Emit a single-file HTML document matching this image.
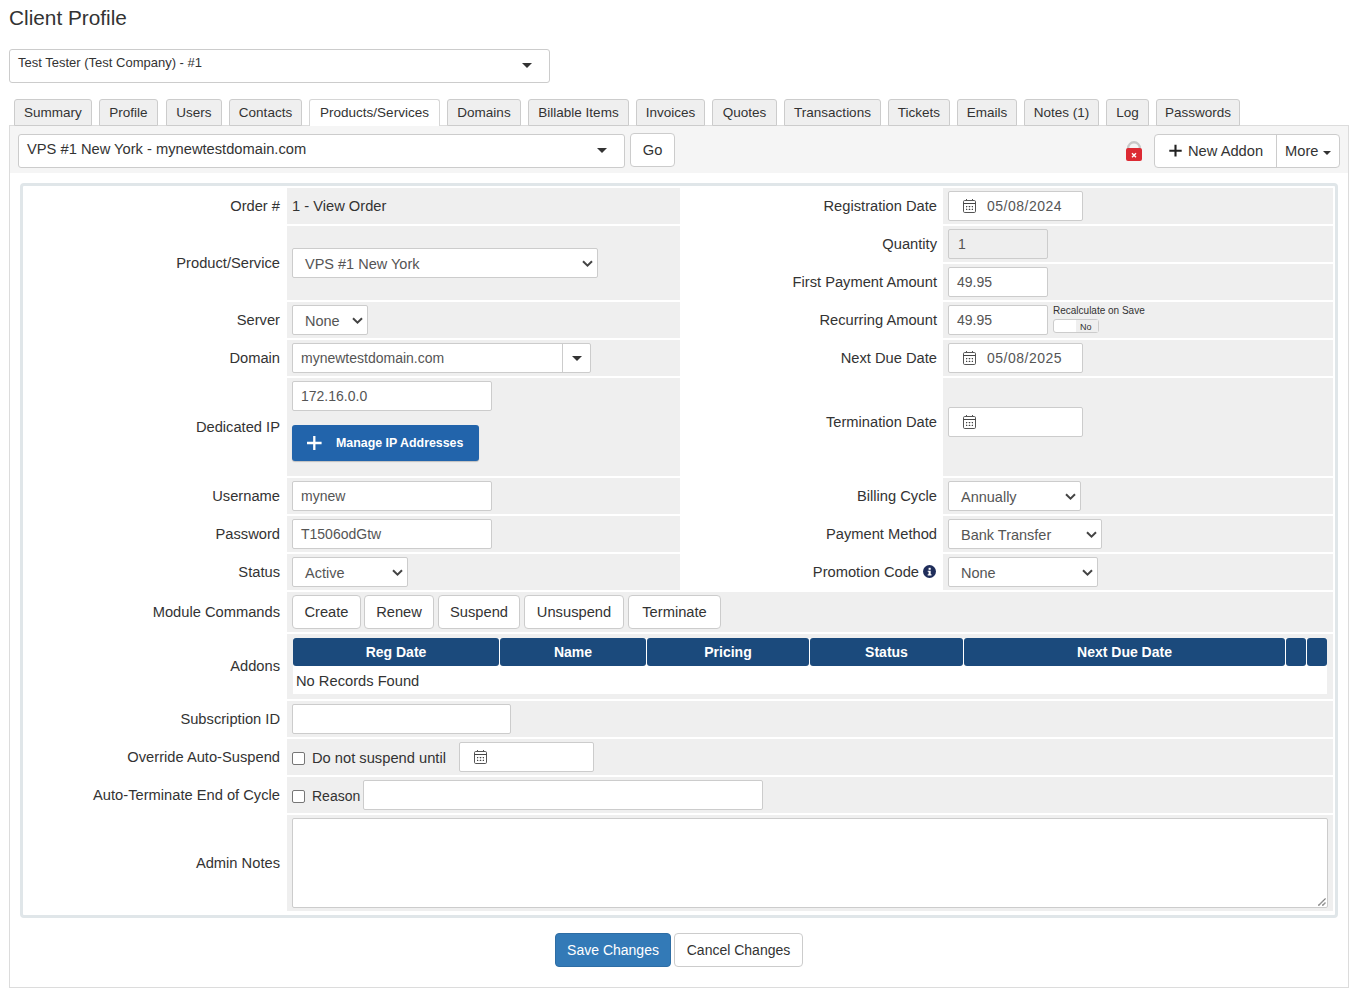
<!DOCTYPE html><html><head><meta charset="utf-8"><style>
html,body{margin:0;padding:0;background:#fff;}
body{width:1359px;height:997px;position:relative;overflow:hidden;font-family:"Liberation Sans",sans-serif;color:#333;}
.a{position:absolute;box-sizing:border-box;}
.t{font-size:14.7px;color:#333;white-space:nowrap;}
.it{font-size:14px;color:#555;white-space:nowrap;}
.inp{border:1px solid #ccc;border-radius:2px;}
.tab{background:#efefef;border:1px solid #ccc;border-radius:3px 3px 0 0;}
.fa{background:#efefef;}
.btn{background:#fff;border:1px solid #ccc;border-radius:4px;}
</style></head><body>
<div class="a t" style="left:9px;top:3px;height:30px;line-height:30px;font-size:20.8px;color:#333;">Client Profile</div>
<div class="a " style="left:9px;top:49px;width:541px;height:34px;background:#fff;border:1px solid #ccc;border-radius:3px;"></div>
<div class="a t" style="left:18px;top:53px;height:20px;line-height:20px;font-size:13px;color:#333;">Test Tester (Test Company) - #1</div>
<div class="a" style="left:522px;top:63px;width:10px;height:5px;line-height:0"><svg width="10" height="5" viewBox="0 0 10 5"><path d="M0 0 L10 0 L5 5 Z" fill="#333"/></svg></div>
<div class="a " style="left:9px;top:125px;width:1340px;height:863px;background:#fff;border:1px solid #dcdcdc;"></div>
<div class="a " style="left:10px;top:126px;width:1338px;height:47px;background:#f5f5f5;"></div>
<div class="a tab" style="left:14px;top:99px;width:78px;height:27px;"></div>
<div class="a t" style="left:14px;top:100px;width:78px;height:25px;line-height:25px;text-align:center;font-size:13.5px;">Summary</div>
<div class="a tab" style="left:99px;top:99px;width:59px;height:27px;"></div>
<div class="a t" style="left:99px;top:100px;width:59px;height:25px;line-height:25px;text-align:center;font-size:13.5px;">Profile</div>
<div class="a tab" style="left:166px;top:99px;width:56px;height:27px;"></div>
<div class="a t" style="left:166px;top:100px;width:56px;height:25px;line-height:25px;text-align:center;font-size:13.5px;">Users</div>
<div class="a tab" style="left:229px;top:99px;width:73px;height:27px;"></div>
<div class="a t" style="left:229px;top:100px;width:73px;height:25px;line-height:25px;text-align:center;font-size:13.5px;">Contacts</div>
<div class="a tab" style="left:309px;top:99px;width:131px;height:27px;background:#fff;border-bottom:none;border-color:#d6d6d6;"></div>
<div class="a t" style="left:309px;top:100px;width:131px;height:25px;line-height:25px;text-align:center;font-size:13.5px;">Products/Services</div>
<div class="a tab" style="left:447px;top:99px;width:74px;height:27px;"></div>
<div class="a t" style="left:447px;top:100px;width:74px;height:25px;line-height:25px;text-align:center;font-size:13.5px;">Domains</div>
<div class="a tab" style="left:528px;top:99px;width:101px;height:27px;"></div>
<div class="a t" style="left:528px;top:100px;width:101px;height:25px;line-height:25px;text-align:center;font-size:13.5px;">Billable Items</div>
<div class="a tab" style="left:636px;top:99px;width:69px;height:27px;"></div>
<div class="a t" style="left:636px;top:100px;width:69px;height:25px;line-height:25px;text-align:center;font-size:13.5px;">Invoices</div>
<div class="a tab" style="left:712px;top:99px;width:65px;height:27px;"></div>
<div class="a t" style="left:712px;top:100px;width:65px;height:25px;line-height:25px;text-align:center;font-size:13.5px;">Quotes</div>
<div class="a tab" style="left:784px;top:99px;width:97px;height:27px;"></div>
<div class="a t" style="left:784px;top:100px;width:97px;height:25px;line-height:25px;text-align:center;font-size:13.5px;">Transactions</div>
<div class="a tab" style="left:888px;top:99px;width:62px;height:27px;"></div>
<div class="a t" style="left:888px;top:100px;width:62px;height:25px;line-height:25px;text-align:center;font-size:13.5px;">Tickets</div>
<div class="a tab" style="left:957px;top:99px;width:60px;height:27px;"></div>
<div class="a t" style="left:957px;top:100px;width:60px;height:25px;line-height:25px;text-align:center;font-size:13.5px;">Emails</div>
<div class="a tab" style="left:1024px;top:99px;width:75px;height:27px;"></div>
<div class="a t" style="left:1024px;top:100px;width:75px;height:25px;line-height:25px;text-align:center;font-size:13.5px;">Notes (1)</div>
<div class="a tab" style="left:1106px;top:99px;width:43px;height:27px;"></div>
<div class="a t" style="left:1106px;top:100px;width:43px;height:25px;line-height:25px;text-align:center;font-size:13.5px;">Log</div>
<div class="a tab" style="left:1156px;top:99px;width:84px;height:27px;"></div>
<div class="a t" style="left:1156px;top:100px;width:84px;height:25px;line-height:25px;text-align:center;font-size:13.5px;">Passwords</div>
<div class="a " style="left:18px;top:134px;width:607px;height:34px;background:#fff;border:1px solid #ccc;border-radius:3px;"></div>
<div class="a t" style="left:27px;top:133px;height:32px;line-height:32px;">VPS #1 New York - mynewtestdomain.com</div>
<div class="a" style="left:597px;top:148px;width:10px;height:5px;line-height:0"><svg width="10" height="5" viewBox="0 0 10 5"><path d="M0 0 L10 0 L5 5 Z" fill="#333"/></svg></div>
<div class="a btn" style="left:630px;top:133px;width:45px;height:34px;"></div>
<div class="a t" style="left:630px;top:133px;width:45px;height:34px;line-height:34px;text-align:center;">Go</div>
<div class="a" style="left:1124px;top:140px;width:20px;height:22px;line-height:0"><svg width="20" height="22" viewBox="0 0 20 22"><path d="M4.15 9.5 V8.1 A5.85 5.85 0 0 1 15.85 8.1 V9.5" fill="none" stroke="#c8c8c8" stroke-width="2.3"/><rect x="2" y="8" width="16" height="13" rx="2" fill="#dc2a33"/><path d="M8 13.3 L12 17.3 M12 13.3 L8 17.3" stroke="#fff" stroke-width="1.4"/></svg></div>
<div class="a btn" style="left:1154px;top:134px;width:186px;height:34px;"></div>
<div class="a " style="left:1276px;top:134px;width:1px;height:34px;background:#ccc;"></div>
<div class="a" style="left:1169px;top:144px;width:13px;height:13px;line-height:0"><svg width="13" height="13" viewBox="0 0 13 13"><path d="M6.5 0.8 V12.5 M0.3 6.7 H12.7" stroke="#222" stroke-width="2.1"/></svg></div>
<div class="a t" style="left:1188px;top:134px;height:34px;line-height:34px;">New Addon</div>
<div class="a t" style="left:1285px;top:134px;height:34px;line-height:34px;">More</div>
<div class="a" style="left:1323px;top:150px;width:8px;height:4px;line-height:0"><svg width="8" height="4" viewBox="0 0 8 4"><path d="M0 0 L8 0 L4 4 Z" fill="#333"/></svg></div>
<div class="a " style="left:20px;top:183px;width:1318px;height:735px;border:3px solid #e0e6e9;border-radius:4px;background:#fff;"></div>
<div class="a fa" style="left:287px;top:188px;width:393px;height:36px;"></div>
<div class="a t" style="right:1079px;top:188px;height:36px;line-height:36px;text-align:right;">Order #</div>
<div class="a t" style="left:292px;top:188px;height:36px;line-height:36px;">1 - View Order</div>
<div class="a fa" style="left:287px;top:226px;width:393px;height:74px;"></div>
<div class="a t" style="right:1079px;top:226px;height:74px;line-height:74px;text-align:right;">Product/Service</div>
<div class="a inp" style="left:292px;top:248px;width:306px;height:30px;background:#fff;"></div>
<div class="a it" style="left:305px;top:249px;height:30px;line-height:30px;font-size:14.5px;">VPS #1 New York</div>
<div class="a" style="left:582px;top:260px;width:11px;height:7px;line-height:0"><svg width="11" height="7" viewBox="0 0 11 7"><path d="M1 1.2 L5.5 5.6 L10 1.2" fill="none" stroke="#444" stroke-width="2"/></svg></div>
<div class="a fa" style="left:287px;top:302px;width:393px;height:36px;"></div>
<div class="a t" style="right:1079px;top:302px;height:36px;line-height:36px;text-align:right;">Server</div>
<div class="a inp" style="left:292px;top:305px;width:76px;height:30px;background:#fff;"></div>
<div class="a it" style="left:305px;top:306px;height:30px;line-height:30px;font-size:14.5px;">None</div>
<div class="a" style="left:352px;top:317px;width:11px;height:7px;line-height:0"><svg width="11" height="7" viewBox="0 0 11 7"><path d="M1 1.2 L5.5 5.6 L10 1.2" fill="none" stroke="#444" stroke-width="2"/></svg></div>
<div class="a fa" style="left:287px;top:340px;width:393px;height:36px;"></div>
<div class="a t" style="right:1079px;top:340px;height:36px;line-height:36px;text-align:right;">Domain</div>
<div class="a inp" style="left:292px;top:343px;width:299px;height:30px;background:#fff;"></div>
<div class="a " style="left:562px;top:343px;width:1px;height:30px;background:#ccc;"></div>
<div class="a it" style="left:301px;top:343px;height:30px;line-height:30px;">mynewtestdomain.com</div>
<div class="a" style="left:572px;top:356px;width:10px;height:5px;line-height:0"><svg width="10" height="5" viewBox="0 0 10 5"><path d="M0 0 L10 0 L5 5 Z" fill="#333"/></svg></div>
<div class="a fa" style="left:287px;top:378px;width:393px;height:98px;"></div>
<div class="a t" style="right:1079px;top:378px;height:98px;line-height:98px;text-align:right;">Dedicated IP</div>
<div class="a inp" style="left:292px;top:381px;width:200px;height:30px;background:#fff;"></div>
<div class="a it" style="left:301px;top:381px;height:30px;line-height:30px;">172.16.0.0</div>
<div class="a " style="left:292px;top:425px;width:187px;height:36px;background:#2264ab;border-radius:3px;box-shadow:0 1px 1px rgba(0,0,0,.2);"></div>
<div class="a" style="left:307px;top:436px;width:15px;height:15px;line-height:0"><svg width="15" height="15" viewBox="0 0 15 15"><path d="M7.3 0 V14 M0 7 H14.6" stroke="#fff" stroke-width="2.3"/></svg></div>
<div class="a t" style="left:336px;top:425px;height:36px;line-height:36px;font-size:12.4px;font-weight:bold;color:#fff;">Manage IP Addresses</div>
<div class="a fa" style="left:943px;top:188px;width:390px;height:36px;"></div>
<div class="a t" style="right:422px;top:188px;height:36px;line-height:36px;text-align:right;">Registration Date</div>
<div class="a inp" style="left:948px;top:191px;width:135px;height:30px;background:#fff;"></div>
<div class="a" style="left:962px;top:199px;width:16px;height:16px;line-height:0"><svg width="16" height="16" viewBox="0 0 16 16"><rect x="1.5" y="1.5" width="12" height="12" rx="1.2" fill="none" stroke="#555" stroke-width="1"/><line x1="1.5" y1="4.5" x2="13.5" y2="4.5" stroke="#444" stroke-width="1"/><line x1="4.5" y1="0" x2="4.5" y2="2" stroke="#555" stroke-width="1"/><line x1="10.5" y1="0" x2="10.5" y2="2" stroke="#555" stroke-width="1"/><g fill="#444"><rect x="4" y="7" width="1" height="1"/><rect x="7" y="7" width="1" height="1"/><rect x="10" y="7" width="1" height="1"/><rect x="4" y="10" width="1" height="1"/><rect x="7" y="10" width="1" height="1"/><rect x="10" y="10" width="1" height="1"/></g><g fill="#999"><rect x="5" y="7" width="2" height="1" opacity=".5"/><rect x="8" y="7" width="2" height="1" opacity=".5"/><rect x="4" y="8" width="1" height="2" opacity=".5"/><rect x="10" y="8" width="1" height="2" opacity=".5"/><rect x="7" y="8" width="1" height="2" opacity=".5"/><rect x="5" y="10" width="2" height="1" opacity=".5"/><rect x="8" y="10" width="2" height="1" opacity=".5"/></g></svg></div>
<div class="a it" style="left:987px;top:191px;height:30px;line-height:30px;"><span style="letter-spacing:.5px">05/08/2024</span></div>
<div class="a fa" style="left:943px;top:226px;width:390px;height:36px;"></div>
<div class="a t" style="right:422px;top:226px;height:36px;line-height:36px;text-align:right;">Quantity</div>
<div class="a inp" style="left:948px;top:229px;width:100px;height:30px;background:#eee;"></div>
<div class="a it" style="left:958px;top:229px;height:30px;line-height:30px;">1</div>
<div class="a fa" style="left:943px;top:264px;width:390px;height:36px;"></div>
<div class="a t" style="right:422px;top:264px;height:36px;line-height:36px;text-align:right;">First Payment Amount</div>
<div class="a inp" style="left:948px;top:267px;width:100px;height:30px;background:#fff;"></div>
<div class="a it" style="left:957px;top:267px;height:30px;line-height:30px;">49.95</div>
<div class="a fa" style="left:943px;top:302px;width:390px;height:36px;"></div>
<div class="a t" style="right:422px;top:302px;height:36px;line-height:36px;text-align:right;">Recurring Amount</div>
<div class="a inp" style="left:948px;top:305px;width:100px;height:30px;background:#fff;"></div>
<div class="a it" style="left:957px;top:305px;height:30px;line-height:30px;">49.95</div>
<div class="a t" style="left:1053px;top:304px;height:14px;line-height:14px;font-size:10px;color:#333;">Recalculate on Save</div>
<div class="a " style="left:1053px;top:319px;width:46px;height:14px;background:#fff;border:1px solid #ccc;border-radius:3px;"></div>
<div class="a " style="left:1076px;top:320px;width:22px;height:12px;background:#efefef;"></div>
<div class="a t" style="left:1080px;top:320px;height:14px;line-height:14px;font-size:9px;color:#333;">No</div>
<div class="a fa" style="left:943px;top:340px;width:390px;height:36px;"></div>
<div class="a t" style="right:422px;top:340px;height:36px;line-height:36px;text-align:right;">Next Due Date</div>
<div class="a inp" style="left:948px;top:343px;width:135px;height:30px;background:#fff;"></div>
<div class="a" style="left:962px;top:351px;width:16px;height:16px;line-height:0"><svg width="16" height="16" viewBox="0 0 16 16"><rect x="1.5" y="1.5" width="12" height="12" rx="1.2" fill="none" stroke="#555" stroke-width="1"/><line x1="1.5" y1="4.5" x2="13.5" y2="4.5" stroke="#444" stroke-width="1"/><line x1="4.5" y1="0" x2="4.5" y2="2" stroke="#555" stroke-width="1"/><line x1="10.5" y1="0" x2="10.5" y2="2" stroke="#555" stroke-width="1"/><g fill="#444"><rect x="4" y="7" width="1" height="1"/><rect x="7" y="7" width="1" height="1"/><rect x="10" y="7" width="1" height="1"/><rect x="4" y="10" width="1" height="1"/><rect x="7" y="10" width="1" height="1"/><rect x="10" y="10" width="1" height="1"/></g><g fill="#999"><rect x="5" y="7" width="2" height="1" opacity=".5"/><rect x="8" y="7" width="2" height="1" opacity=".5"/><rect x="4" y="8" width="1" height="2" opacity=".5"/><rect x="10" y="8" width="1" height="2" opacity=".5"/><rect x="7" y="8" width="1" height="2" opacity=".5"/><rect x="5" y="10" width="2" height="1" opacity=".5"/><rect x="8" y="10" width="2" height="1" opacity=".5"/></g></svg></div>
<div class="a it" style="left:987px;top:343px;height:30px;line-height:30px;"><span style="letter-spacing:.5px">05/08/2025</span></div>
<div class="a fa" style="left:943px;top:378px;width:390px;height:98px;"></div>
<div class="a t" style="right:422px;top:404px;height:36px;line-height:36px;text-align:right;">Termination Date</div>
<div class="a inp" style="left:948px;top:407px;width:135px;height:30px;background:#fff;"></div>
<div class="a" style="left:962px;top:415px;width:16px;height:16px;line-height:0"><svg width="16" height="16" viewBox="0 0 16 16"><rect x="1.5" y="1.5" width="12" height="12" rx="1.2" fill="none" stroke="#555" stroke-width="1"/><line x1="1.5" y1="4.5" x2="13.5" y2="4.5" stroke="#444" stroke-width="1"/><line x1="4.5" y1="0" x2="4.5" y2="2" stroke="#555" stroke-width="1"/><line x1="10.5" y1="0" x2="10.5" y2="2" stroke="#555" stroke-width="1"/><g fill="#444"><rect x="4" y="7" width="1" height="1"/><rect x="7" y="7" width="1" height="1"/><rect x="10" y="7" width="1" height="1"/><rect x="4" y="10" width="1" height="1"/><rect x="7" y="10" width="1" height="1"/><rect x="10" y="10" width="1" height="1"/></g><g fill="#999"><rect x="5" y="7" width="2" height="1" opacity=".5"/><rect x="8" y="7" width="2" height="1" opacity=".5"/><rect x="4" y="8" width="1" height="2" opacity=".5"/><rect x="10" y="8" width="1" height="2" opacity=".5"/><rect x="7" y="8" width="1" height="2" opacity=".5"/><rect x="5" y="10" width="2" height="1" opacity=".5"/><rect x="8" y="10" width="2" height="1" opacity=".5"/></g></svg></div>
<div class="a fa" style="left:287px;top:478px;width:393px;height:36px;"></div>
<div class="a t" style="right:1079px;top:478px;height:36px;line-height:36px;text-align:right;">Username</div>
<div class="a inp" style="left:292px;top:481px;width:200px;height:30px;background:#fff;"></div>
<div class="a it" style="left:301px;top:481px;height:30px;line-height:30px;">mynew</div>
<div class="a fa" style="left:287px;top:516px;width:393px;height:36px;"></div>
<div class="a t" style="right:1079px;top:516px;height:36px;line-height:36px;text-align:right;">Password</div>
<div class="a inp" style="left:292px;top:519px;width:200px;height:30px;background:#fff;"></div>
<div class="a it" style="left:301px;top:519px;height:30px;line-height:30px;">T1506odGtw</div>
<div class="a fa" style="left:287px;top:554px;width:393px;height:36px;"></div>
<div class="a t" style="right:1079px;top:554px;height:36px;line-height:36px;text-align:right;">Status</div>
<div class="a inp" style="left:292px;top:557px;width:116px;height:30px;background:#fff;"></div>
<div class="a it" style="left:305px;top:558px;height:30px;line-height:30px;font-size:14.5px;">Active</div>
<div class="a" style="left:392px;top:569px;width:11px;height:7px;line-height:0"><svg width="11" height="7" viewBox="0 0 11 7"><path d="M1 1.2 L5.5 5.6 L10 1.2" fill="none" stroke="#444" stroke-width="2"/></svg></div>
<div class="a fa" style="left:943px;top:478px;width:390px;height:36px;"></div>
<div class="a t" style="right:422px;top:478px;height:36px;line-height:36px;text-align:right;">Billing Cycle</div>
<div class="a inp" style="left:948px;top:481px;width:133px;height:30px;background:#fff;"></div>
<div class="a it" style="left:961px;top:482px;height:30px;line-height:30px;font-size:14.5px;">Annually</div>
<div class="a" style="left:1065px;top:493px;width:11px;height:7px;line-height:0"><svg width="11" height="7" viewBox="0 0 11 7"><path d="M1 1.2 L5.5 5.6 L10 1.2" fill="none" stroke="#444" stroke-width="2"/></svg></div>
<div class="a fa" style="left:943px;top:516px;width:390px;height:36px;"></div>
<div class="a t" style="right:422px;top:516px;height:36px;line-height:36px;text-align:right;">Payment Method</div>
<div class="a inp" style="left:948px;top:519px;width:154px;height:30px;background:#fff;"></div>
<div class="a it" style="left:961px;top:520px;height:30px;line-height:30px;font-size:14.5px;">Bank Transfer</div>
<div class="a" style="left:1086px;top:531px;width:11px;height:7px;line-height:0"><svg width="11" height="7" viewBox="0 0 11 7"><path d="M1 1.2 L5.5 5.6 L10 1.2" fill="none" stroke="#444" stroke-width="2"/></svg></div>
<div class="a fa" style="left:943px;top:554px;width:390px;height:36px;"></div>
<div class="a t" style="right:422px;top:554px;height:36px;line-height:36px;text-align:right;"></div>
<div class="a t" style="right:440px;top:554px;height:36px;line-height:36px;text-align:right;">Promotion Code</div>
<div class="a" style="left:923px;top:565px;width:13px;height:13px;line-height:0"><svg width="13" height="13" viewBox="0 0 13 13"><circle cx="6.5" cy="6.5" r="6.5" fill="#1f2d5a"/><rect x="5.6" y="2.8" width="2.1" height="2" fill="#fff"/><path d="M4.7 5.7 H7.7 V9.3 H8.5 V10.4 H4.7 V9.3 H5.6 V6.7 H4.7 Z" fill="#fff"/></svg></div>
<div class="a inp" style="left:948px;top:557px;width:150px;height:30px;background:#fff;"></div>
<div class="a it" style="left:961px;top:558px;height:30px;line-height:30px;font-size:14.5px;">None</div>
<div class="a" style="left:1082px;top:569px;width:11px;height:7px;line-height:0"><svg width="11" height="7" viewBox="0 0 11 7"><path d="M1 1.2 L5.5 5.6 L10 1.2" fill="none" stroke="#444" stroke-width="2"/></svg></div>
<div class="a fa" style="left:287px;top:592px;width:1046px;height:40px;"></div>
<div class="a t" style="right:1079px;top:592px;height:40px;line-height:40px;text-align:right;">Module Commands</div>
<div class="a btn" style="left:292px;top:595px;width:69px;height:34px;"></div>
<div class="a t" style="left:292px;top:595px;width:69px;height:34px;line-height:34px;text-align:center;">Create</div>
<div class="a btn" style="left:364px;top:595px;width:70px;height:34px;"></div>
<div class="a t" style="left:364px;top:595px;width:70px;height:34px;line-height:34px;text-align:center;">Renew</div>
<div class="a btn" style="left:438px;top:595px;width:82px;height:34px;"></div>
<div class="a t" style="left:438px;top:595px;width:82px;height:34px;line-height:34px;text-align:center;">Suspend</div>
<div class="a btn" style="left:524px;top:595px;width:100px;height:34px;"></div>
<div class="a t" style="left:524px;top:595px;width:100px;height:34px;line-height:34px;text-align:center;">Unsuspend</div>
<div class="a btn" style="left:628px;top:595px;width:93px;height:34px;"></div>
<div class="a t" style="left:628px;top:595px;width:93px;height:34px;line-height:34px;text-align:center;">Terminate</div>
<div class="a fa" style="left:287px;top:634px;width:1046px;height:65px;"></div>
<div class="a t" style="right:1079px;top:634px;height:65px;line-height:65px;text-align:right;">Addons</div>
<div class="a " style="left:293px;top:638px;width:1034px;height:56px;background:#fff;"></div>
<div class="a " style="left:293px;top:638px;width:206px;height:28px;background:#1b4a7c;border-radius:3px;"></div>
<div class="a t" style="left:293px;top:638px;width:206px;height:28px;line-height:28px;text-align:center;color:#fff;font-weight:bold;font-size:14px;">Reg Date</div>
<div class="a " style="left:500px;top:638px;width:146px;height:28px;background:#1b4a7c;border-radius:3px;"></div>
<div class="a t" style="left:500px;top:638px;width:146px;height:28px;line-height:28px;text-align:center;color:#fff;font-weight:bold;font-size:14px;">Name</div>
<div class="a " style="left:647px;top:638px;width:162px;height:28px;background:#1b4a7c;border-radius:3px;"></div>
<div class="a t" style="left:647px;top:638px;width:162px;height:28px;line-height:28px;text-align:center;color:#fff;font-weight:bold;font-size:14px;">Pricing</div>
<div class="a " style="left:810px;top:638px;width:153px;height:28px;background:#1b4a7c;border-radius:3px;"></div>
<div class="a t" style="left:810px;top:638px;width:153px;height:28px;line-height:28px;text-align:center;color:#fff;font-weight:bold;font-size:14px;">Status</div>
<div class="a " style="left:964px;top:638px;width:321px;height:28px;background:#1b4a7c;border-radius:3px;"></div>
<div class="a t" style="left:964px;top:638px;width:321px;height:28px;line-height:28px;text-align:center;color:#fff;font-weight:bold;font-size:14px;">Next Due Date</div>
<div class="a " style="left:1286px;top:638px;width:20px;height:28px;background:#1b4a7c;border-radius:3px;"></div>
<div class="a " style="left:1307px;top:638px;width:20px;height:28px;background:#1b4a7c;border-radius:3px;"></div>
<div class="a t" style="left:296px;top:668px;height:26px;line-height:26px;">No Records Found</div>
<div class="a fa" style="left:287px;top:701px;width:1046px;height:36px;"></div>
<div class="a t" style="right:1079px;top:701px;height:36px;line-height:36px;text-align:right;">Subscription ID</div>
<div class="a inp" style="left:292px;top:704px;width:219px;height:30px;background:#fff;"></div>
<div class="a fa" style="left:287px;top:739px;width:1046px;height:36px;"></div>
<div class="a t" style="right:1079px;top:739px;height:36px;line-height:36px;text-align:right;">Override Auto-Suspend</div>
<div class="a " style="left:292px;top:752px;width:13px;height:13px;background:#fff;border:1px solid #767676;border-radius:2px;"></div>
<div class="a t" style="left:312px;top:740px;height:36px;line-height:36px;">Do not suspend until</div>
<div class="a inp" style="left:459px;top:742px;width:135px;height:30px;background:#fff;"></div>
<div class="a" style="left:473px;top:750px;width:16px;height:16px;line-height:0"><svg width="16" height="16" viewBox="0 0 16 16"><rect x="1.5" y="1.5" width="12" height="12" rx="1.2" fill="none" stroke="#555" stroke-width="1"/><line x1="1.5" y1="4.5" x2="13.5" y2="4.5" stroke="#444" stroke-width="1"/><line x1="4.5" y1="0" x2="4.5" y2="2" stroke="#555" stroke-width="1"/><line x1="10.5" y1="0" x2="10.5" y2="2" stroke="#555" stroke-width="1"/><g fill="#444"><rect x="4" y="7" width="1" height="1"/><rect x="7" y="7" width="1" height="1"/><rect x="10" y="7" width="1" height="1"/><rect x="4" y="10" width="1" height="1"/><rect x="7" y="10" width="1" height="1"/><rect x="10" y="10" width="1" height="1"/></g><g fill="#999"><rect x="5" y="7" width="2" height="1" opacity=".5"/><rect x="8" y="7" width="2" height="1" opacity=".5"/><rect x="4" y="8" width="1" height="2" opacity=".5"/><rect x="10" y="8" width="1" height="2" opacity=".5"/><rect x="7" y="8" width="1" height="2" opacity=".5"/><rect x="5" y="10" width="2" height="1" opacity=".5"/><rect x="8" y="10" width="2" height="1" opacity=".5"/></g></svg></div>
<div class="a fa" style="left:287px;top:777px;width:1046px;height:36px;"></div>
<div class="a t" style="right:1079px;top:777px;height:36px;line-height:36px;text-align:right;">Auto-Terminate End of Cycle</div>
<div class="a " style="left:292px;top:790px;width:13px;height:13px;background:#fff;border:1px solid #767676;border-radius:2px;"></div>
<div class="a t" style="left:312px;top:778px;height:36px;line-height:36px;font-size:14px;">Reason</div>
<div class="a inp" style="left:363px;top:780px;width:400px;height:30px;background:#fff;"></div>
<div class="a fa" style="left:287px;top:815px;width:1046px;height:96px;"></div>
<div class="a t" style="right:1079px;top:815px;height:96px;line-height:96px;text-align:right;">Admin Notes</div>
<div class="a inp" style="left:292px;top:818px;width:1036px;height:90px;background:#fff;"></div>
<div class="a" style="left:1316px;top:896px;width:12px;height:12px;line-height:0"><svg width="12" height="12" viewBox="0 0 12 12"><path d="M2.5 9.5 L9.6 2.4 M6.5 9.5 L9.6 6.4" stroke="#444" stroke-width="1.2" stroke-dasharray="1 0.4"/></svg></div>
<div class="a " style="left:555px;top:933px;width:116px;height:34px;background:#337ab7;border:1px solid #2e6da4;border-radius:4px;"></div>
<div class="a t" style="left:555px;top:933px;width:116px;height:34px;line-height:34px;text-align:center;color:#fff;font-size:14px;">Save Changes</div>
<div class="a btn" style="left:674px;top:933px;width:129px;height:34px;"></div>
<div class="a t" style="left:674px;top:933px;width:129px;height:34px;line-height:34px;text-align:center;font-size:14px;">Cancel Changes</div>
</body></html>
